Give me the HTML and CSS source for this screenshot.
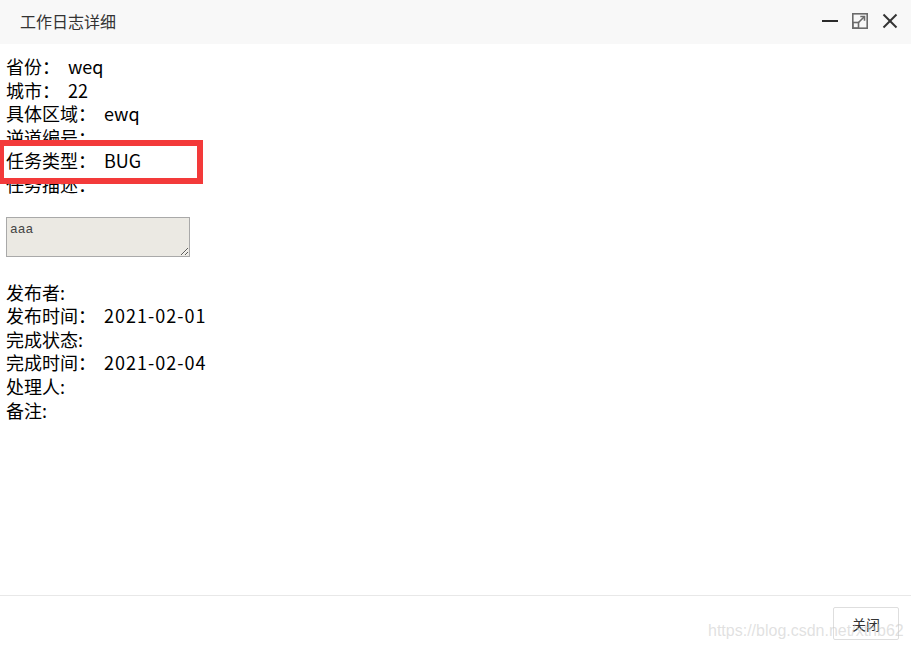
FILE: index.html
```html
<!DOCTYPE html>
<html lang="zh-CN">
<head>
<meta charset="utf-8">
<title>工作日志详细</title>
<link rel="stylesheet" href="styles.css">
</head>
<body>
<div class="dialog">
  <div class="dlg-head">
    <span class="dlg-title">工作日志详细</span>
    <div class="dlg-tools">
      <svg class="ic ic-min" width="18" height="18" viewBox="0 0 18 18"><line x1="1" y1="9" x2="17" y2="9" stroke="#2b2b2b" stroke-width="2"/></svg>
      <svg class="ic ic-max" width="18" height="18" viewBox="0 0 18 18" fill="none" stroke="#6b6b6b" stroke-width="1.6">
        <rect x="1.8" y="1.8" width="14.4" height="14.4"/>
        <rect x="1.8" y="10.5" width="5.7" height="5.7"/>
        <line x1="7.5" y1="10.5" x2="13.5" y2="4.5"/>
        <polyline points="9.3,4.5 13.5,4.5 13.5,8.7"/>
      </svg>
      <svg class="ic ic-close" width="18" height="18" viewBox="0 0 18 18" stroke="#333" stroke-width="2"><line x1="2.5" y1="2.5" x2="15.5" y2="15.5"/><line x1="15.5" y1="2.5" x2="2.5" y2="15.5"/></svg>
    </div>
  </div>
  <div class="dlg-body">
    <div class="row"><span class="lbl">省份：</span><span class="val">weq</span></div>
    <div class="row"><span class="lbl">城市：</span><span class="val">22</span></div>
    <div class="row"><span class="lbl">具体区域：</span><span class="val">ewq</span></div>
    <div class="row"><span class="lbl">逆道编号：</span></div>
    <div class="row"><span class="lbl">任务类型：</span><span class="val">BUG</span></div>
    <div class="row"><span class="lbl">任务描述：</span></div>
    <textarea class="desc" readonly>aaa</textarea>
    <div class="row"><span class="lbl">发布者:</span></div>
    <div class="row"><span class="lbl">发布时间：</span><span class="val date">2021-02-01</span></div>
    <div class="row"><span class="lbl">完成状态:</span></div>
    <div class="row"><span class="lbl">完成时间：</span><span class="val date">2021-02-04</span></div>
    <div class="row"><span class="lbl">处理人:</span></div>
    <div class="row"><span class="lbl">备注:</span></div>

    <div class="highlight"><span class="lbl">任务类型：</span><span class="val">BUG</span></div>
  </div>
  <div class="dlg-foot">
    <button class="btn">关闭</button>
  </div>
  <div class="watermark">https://blog.csdn.net/xthb62</div>
</div>
</body>
</html>
```

FILE: styles.css
```css
* { box-sizing: border-box; }
html, body {
  margin: 0;
  padding: 0;
  height: 100%;
  background: #fff;
}
body {
  font-family: "Noto Sans CJK SC", "Microsoft YaHei", sans-serif;
  color: #000;
  overflow: hidden;
}
.dialog {
  position: relative;
  height: 651px;
  display: flex;
  flex-direction: column;
}
.dlg-head {
  height: 44px;
  flex: none;
  background: #f8f8f8;
  display: flex;
  align-items: center;
  justify-content: space-between;
  padding: 0 12px 0 20px;
}
.dlg-title {
  font-size: 16px;
  color: #333;
  line-height: 44px;
  margin-top: -2px;
}
.dlg-tools {
  display: flex;
  align-items: center;
  gap: 12px;
  margin-top: -2px;
}
.ic { display: block; }
.dlg-body {
  position: relative;
  flex: 1;
  padding: 11px 0 0 6px;
  font-size: 18px;
}
.row {
  line-height: 23.6px;
  height: 23.6px;
  white-space: nowrap;
}
.val { margin-left: 8px; }
.date { letter-spacing: 1px; }
.desc {
  display: block;
  width: 184px;
  height: 40px;
  margin: 20px 0 24px 0;
  padding: 4px 3px;
  border: 1px solid #a9a9a9;
  background: #ebe9e3;
  font-family: "Liberation Mono", monospace;
  font-size: 13px;
  line-height: 16px;
  color: #444;
  resize: both;
  outline: none;
}
.highlight {
  position: absolute;
  left: -2px;
  top: 96px;
  width: 205px;
  height: 44px;
  border: 6px solid #f33a3a;
  background: #fff;
  padding: 3px 0 0 2px;
  line-height: 23.6px;
  white-space: nowrap;
}
.dlg-foot {
  flex: none;
  border-top: 1px solid #e8e8e8;
  padding: 11px 12px 11px 0;
  display: flex;
  justify-content: flex-end;
}
.btn {
  width: 66px;
  height: 33px;
  border: 1px solid #dedede;
  border-radius: 2px;
  background: #fff;
  color: #333;
  font-family: "Noto Sans CJK SC", sans-serif;
  font-size: 14px;
  padding: 0;
}
.watermark {
  position: absolute;
  left: 708px;
  top: 620px;
  font-family: "Liberation Sans", Arial, sans-serif;
  font-size: 16px;
  line-height: 22px;
  color: rgba(200, 200, 200, 0.55);
  pointer-events: none;
}
```
